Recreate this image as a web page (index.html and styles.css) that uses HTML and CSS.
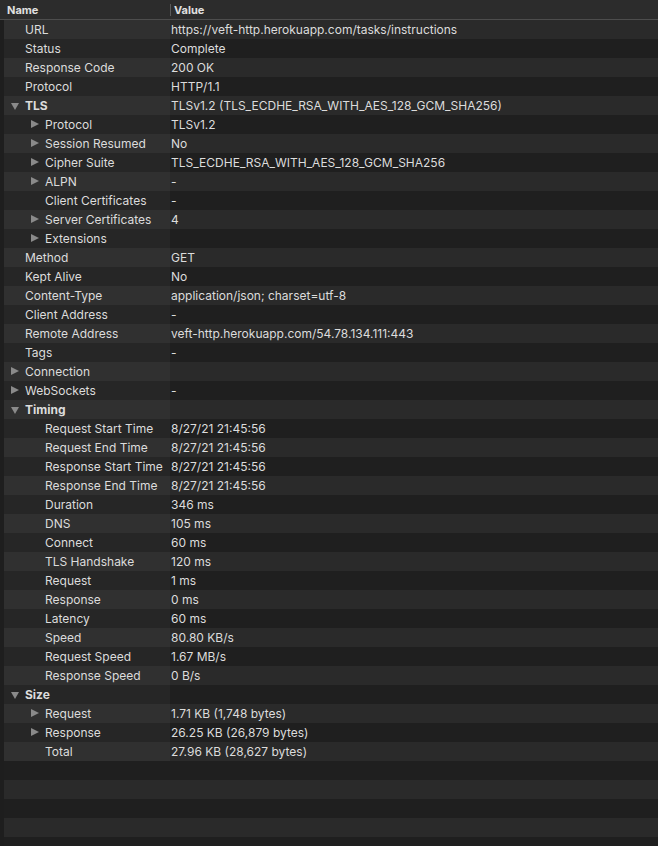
FILE: index.html
```html
<!DOCTYPE html>
<html>
<head>
<meta charset="utf-8">
<link rel="stylesheet" href="styles.css">
</head>
<body>
<div class="table">
  <div class="head">
    <div class="hname">Name</div>
    <div class="hval">Value</div>
  </div>
  <div class="rows">
    <div class="row"><div class="name l1"><span class="tw"></span>URL</div><div class="val">https://veft-http.herokuapp.com/tasks/instructions</div></div>
    <div class="row"><div class="name l1"><span class="tw"></span>Status</div><div class="val">Complete</div></div>
    <div class="row"><div class="name l1"><span class="tw"></span>Response Code</div><div class="val">200 OK</div></div>
    <div class="row"><div class="name l1"><span class="tw"></span>Protocol</div><div class="val">HTTP/1.1</div></div>
    <div class="row"><div class="name l1 bold"><span class="tw open"></span>TLS</div><div class="val">TLSv1.2 (TLS_ECDHE_RSA_WITH_AES_128_GCM_SHA256)</div></div>
    <div class="row"><div class="name l2"><span class="tw closed"></span>Protocol</div><div class="val">TLSv1.2</div></div>
    <div class="row"><div class="name l2"><span class="tw closed"></span>Session Resumed</div><div class="val">No</div></div>
    <div class="row"><div class="name l2"><span class="tw closed"></span>Cipher Suite</div><div class="val">TLS_ECDHE_RSA_WITH_AES_128_GCM_SHA256</div></div>
    <div class="row"><div class="name l2"><span class="tw closed"></span>ALPN</div><div class="val">-</div></div>
    <div class="row"><div class="name l2"><span class="tw"></span>Client Certificates</div><div class="val">-</div></div>
    <div class="row"><div class="name l2"><span class="tw closed"></span>Server Certificates</div><div class="val">4</div></div>
    <div class="row"><div class="name l2"><span class="tw closed"></span>Extensions</div><div class="val"></div></div>
    <div class="row"><div class="name l1"><span class="tw"></span>Method</div><div class="val">GET</div></div>
    <div class="row"><div class="name l1"><span class="tw"></span>Kept Alive</div><div class="val">No</div></div>
    <div class="row"><div class="name l1"><span class="tw"></span>Content-Type</div><div class="val">application/json; charset=utf-8</div></div>
    <div class="row"><div class="name l1"><span class="tw"></span>Client Address</div><div class="val">-</div></div>
    <div class="row"><div class="name l1"><span class="tw"></span>Remote Address</div><div class="val">veft-http.herokuapp.com/54.78.134.111:443</div></div>
    <div class="row"><div class="name l1"><span class="tw"></span>Tags</div><div class="val">-</div></div>
    <div class="row"><div class="name l1"><span class="tw closed"></span>Connection</div><div class="val"></div></div>
    <div class="row"><div class="name l1"><span class="tw closed"></span>WebSockets</div><div class="val">-</div></div>
    <div class="row"><div class="name l1 bold"><span class="tw open"></span>Timing</div><div class="val"></div></div>
    <div class="row"><div class="name l2"><span class="tw"></span>Request Start Time</div><div class="val">8/27/21 21:45:56</div></div>
    <div class="row"><div class="name l2"><span class="tw"></span>Request End Time</div><div class="val">8/27/21 21:45:56</div></div>
    <div class="row"><div class="name l2"><span class="tw"></span>Response Start Time</div><div class="val">8/27/21 21:45:56</div></div>
    <div class="row"><div class="name l2"><span class="tw"></span>Response End Time</div><div class="val">8/27/21 21:45:56</div></div>
    <div class="row"><div class="name l2"><span class="tw"></span>Duration</div><div class="val">346 ms</div></div>
    <div class="row"><div class="name l2"><span class="tw"></span>DNS</div><div class="val">105 ms</div></div>
    <div class="row"><div class="name l2"><span class="tw"></span>Connect</div><div class="val">60 ms</div></div>
    <div class="row"><div class="name l2"><span class="tw"></span>TLS Handshake</div><div class="val">120 ms</div></div>
    <div class="row"><div class="name l2"><span class="tw"></span>Request</div><div class="val">1 ms</div></div>
    <div class="row"><div class="name l2"><span class="tw"></span>Response</div><div class="val">0 ms</div></div>
    <div class="row"><div class="name l2"><span class="tw"></span>Latency</div><div class="val">60 ms</div></div>
    <div class="row"><div class="name l2"><span class="tw"></span>Speed</div><div class="val">80.80 KB/s</div></div>
    <div class="row"><div class="name l2"><span class="tw"></span>Request Speed</div><div class="val">1.67 MB/s</div></div>
    <div class="row"><div class="name l2"><span class="tw"></span>Response Speed</div><div class="val">0 B/s</div></div>
    <div class="row"><div class="name l1 bold"><span class="tw open"></span>Size</div><div class="val"></div></div>
    <div class="row"><div class="name l2"><span class="tw closed"></span>Request</div><div class="val">1.71 KB (1,748 bytes)</div></div>
    <div class="row"><div class="name l2"><span class="tw closed"></span>Response</div><div class="val">26.25 KB (26,879 bytes)</div></div>
    <div class="row"><div class="name l2"><span class="tw"></span>Total</div><div class="val">27.96 KB (28,627 bytes)</div></div>
    <div class="row empty"></div>
    <div class="row empty"></div>
    <div class="row empty"></div>
    <div class="row empty"></div>
    <div class="row empty"></div>
  </div>
</div>
</body>
</html>
```
FILE: styles.css
```css
html, body {
  margin: 0;
  padding: 0;
  height: 846px;
  overflow: hidden;
  background: #202020;
}
body {
  font-family: Inter, "Liberation Sans", Arial, sans-serif;
  font-size: 12px;
  color: #dcdcdc;
}
.table {
  display: flex;
  flex-direction: column;
}
.head {
  display: flex;
  height: 19px;
  background: #2c2c2c;
  border-bottom: 1px solid #4d4d4d;
  font-weight: bold;
  font-size: 11px;
  color: #e0e0e0;
}
.hname {
  width: 163px;
  padding-left: 7px;
  line-height: 20px;
}
.hval {
  flex: 1;
  padding-left: 4px;
  line-height: 20px;
  position: relative;
}
.hval::before {
  content: "";
  position: absolute;
  left: 0;
  top: 4px;
  height: 12px;
  width: 1px;
  background: #5a5a5a;
}
.rows {
  display: flex;
  flex-direction: column;
  background: #1e1e1e;
  padding-left: 4px;
}
.row {
  display: flex;
  height: 19px;
  line-height: 20px;
  background: #2a2a2a;
}
.row:nth-child(even) {
  background: #1f1f1f;
}
.name {
  width: 166px;
  height: 19px;
  box-sizing: border-box;
  display: flex;
  align-items: flex-start;
  white-space: nowrap;
  overflow: hidden;
  background: #303030;
}
.row:nth-child(even) .name {
  background: #262626;
}
.name.l1 { padding-left: 7px; }
.name.l2 { padding-left: 27px; }
.name.bold { font-weight: 700; }
.tw {
  width: 14px;
  height: 19px;
  flex: none;
  position: relative;
}
.tw.closed::before {
  content: "";
  position: absolute;
  left: 0;
  top: 5px;
  border-style: solid;
  border-width: 4.5px 0 4.5px 8px;
  border-color: transparent transparent transparent #8a8a8a;
}
.tw.open::before {
  content: "";
  position: absolute;
  left: 0;
  top: 7px;
  border-style: solid;
  border-width: 7px 4.5px 0 4.5px;
  border-color: #8a8a8a transparent transparent transparent;
}
.val {
  flex: 1;
  height: 19px;
  padding-left: 1px;
  white-space: nowrap;
  overflow: hidden;
}
```
